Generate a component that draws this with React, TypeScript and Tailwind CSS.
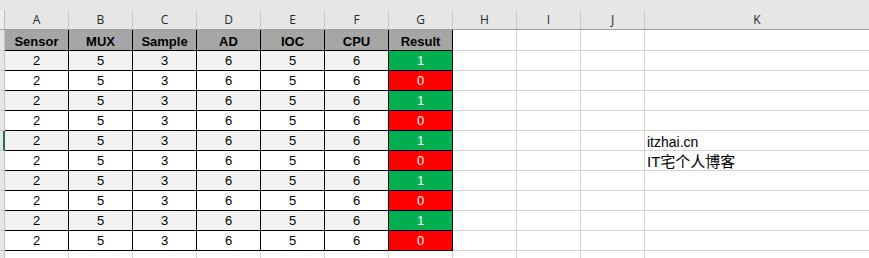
import React from "react";

const letters = ["A", "B", "C", "D", "E", "F", "G", "H", "I", "J", "K"];
const headers = ["Sensor", "MUX", "Sample", "AD", "IOC", "CPU", "Result"];
const values = ["2", "5", "3", "6", "5", "6"];

export default function App() {
  const rows = Array.from({ length: 10 }, (_, i) => i);
  return (
    <div className="w-[869px] h-[258px] overflow-hidden bg-white font-['Liberation_Sans',Arial,sans-serif] text-[13px] text-black">
      <div className="h-[10px] bg-[#e6e6e6]" />
      <div className="grid grid-cols-[5px_repeat(10,64px)_1fr] h-[20px] bg-[#e6e6e6] border-b border-[#a0a0a0] font-['Open_Sans',sans-serif] text-[12px] text-[#262626]">
        <div className="border-r border-[#bdbdbd] bg-[#eeeeee]" />
        {letters.map((l, i) => (
          <div
            key={l}
            className={
              "flex items-center justify-center pt-[1px] leading-4 " +
              (i < letters.length - 1 ? "border-r border-[#c8c8c8]" : "")
            }
          >
            {l}
          </div>
        ))}
      </div>
      {/* header row */}
      <div className="grid grid-cols-[5px_repeat(10,64px)_1fr] h-[21px]">
        <div className="bg-[#e6e6e6] border-r border-b border-[#c6c6c6]" />
        {headers.map((h) => (
          <div
            key={h}
            className="flex items-end justify-center leading-4 font-bold bg-[#a6a6a6] border-r border-b border-black"
          >
            {h}
          </div>
        ))}
        <div className="border-r border-b border-[#d4d4d4]" />
        <div className="border-r border-b border-[#d4d4d4]" />
        <div className="border-r border-b border-[#d4d4d4]" />
        <div className="border-b border-[#d4d4d4]" />
      </div>
      {rows.map((i) => {
        const odd = i % 2 === 0;
        const ok = i % 2 === 0;
        return (
          <div key={i} className="grid grid-cols-[5px_repeat(10,64px)_1fr] h-[20px]">
            <div
              className={
                i === 4
                  ? "bg-[#e6e6e6] border-r-2 border-r-[#217346] border-b border-b-[#c6c6c6]"
                  : "bg-[#e6e6e6] border-r border-b border-[#c6c6c6]"
              }
            />
            {values.map((v, j) => (
              <div
                key={j}
                className={
                  "flex items-end justify-center leading-4 pb-[1px] border-r border-b border-black " +
                  (odd ? "bg-[#f2f2f2]" : "bg-white")
                }
              >
                {v}
              </div>
            ))}
            <div
              className={
                "flex items-end justify-center leading-4 pb-[1px] border-r border-b border-black text-white " +
                (ok ? "bg-[#00b050]" : "bg-[#ff0000]")
              }
            >
              {ok ? "1" : "0"}
            </div>
            <div className="border-r border-b border-[#d4d4d4]" />
            <div className="border-r border-b border-[#d4d4d4]" />
            <div className="border-r border-b border-[#d4d4d4]" />
            <div className="border-b border-[#d4d4d4] flex items-end pl-[2px] leading-4 whitespace-nowrap">
              {i === 4 && <span className="text-[14px] pb-0">itzhai.cn</span>}
              {i === 5 && (
                <span className="text-[15px] font-['Liberation_Sans','Noto_Sans_CJK_SC',sans-serif]">
                  IT宅个人博客
                </span>
              )}
            </div>
          </div>
        );
      })}
      <div className="grid grid-cols-[5px_repeat(10,64px)_1fr] h-[20px]">
        <div className="bg-[#e6e6e6] border-r border-[#c6c6c6]" />
        {Array.from({ length: 10 }, (_, j) => (
          <div key={j} className="border-r border-[#d4d4d4]" />
        ))}
        <div />
      </div>
    </div>
  );
}
